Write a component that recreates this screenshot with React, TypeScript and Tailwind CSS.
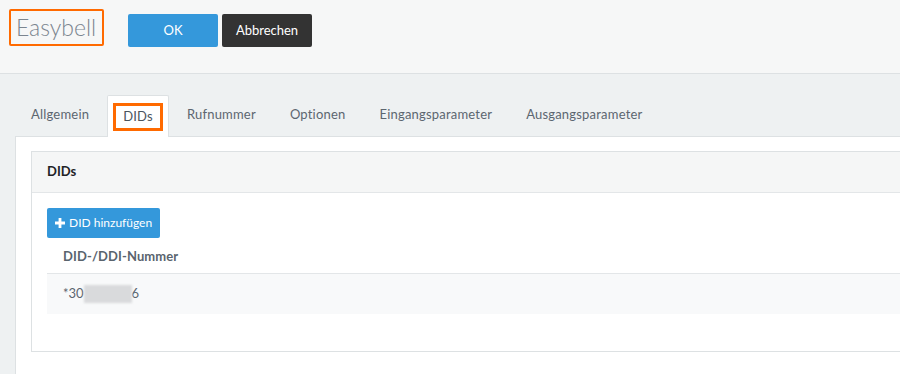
const tabs = ["Allgemein", "DIDs", "Rufnummer", "Optionen", "Eingangsparameter", "Ausgangsparameter"];

export default function App() {
  return (
    <div className="w-[900px] h-[374px] overflow-hidden bg-[#eef1f2] font-['Lato',sans-serif] text-[#4a545e]">
      <div className="h-[74px] bg-[#f6f7f7] border-b border-[#dde1e3] flex items-start pl-[9px] pt-[9px]">
        <div className="w-[95px] h-[37px] border-2 border-[#ff6a00] rounded-[2px] flex items-center pl-[5px]">
          <span className="text-[23px] font-light text-[#7b858f] leading-none">Easybell</span>
        </div>
        <div className="flex mt-[5px] ml-[24px] gap-[4px]">
          <button className="w-[90px] h-[33px] bg-[#3498db] text-white text-[13px] rounded-[2px]">OK</button>
          <button className="w-[90px] h-[33px] bg-[#333333] text-white text-[13px] rounded-[2px]">Abbrechen</button>
        </div>
      </div>

      <div className="pt-[20px] pl-[15px]">
        <div className="flex h-[42px] items-stretch">
          {tabs.map((t) =>
            t === "DIDs" ? (
              <div key={t} className="mr-[2px] px-[5px] bg-white border border-b-0 border-[#dde1e3] rounded-t-[2px] flex items-center relative top-[1px]">
                <span className="border-[3px] border-[#ff6a00] px-[7px] h-[28px] flex items-center text-[13px] tracking-[0.2px] text-[#4a545e]">{t}</span>
              </div>
            ) : (
              <div key={t} className="mr-[2px] px-[16px] flex items-center text-[13px] tracking-[0.2px] text-[#5c6670]">{t}</div>
            )
          )}
        </div>
        <div className="bg-white border-t border-l border-[#dde1e3] h-[240px] pl-[15px] pt-[14px]">
          <div className="border border-r-0 border-[#dde1e3] h-[201px] bg-white">
            <div className="h-[41px] bg-[#f5f6f6] border-b border-[#e3e6e8] flex items-center pl-[15px] text-[13px] font-bold text-[#1f2326]">
              DIDs
            </div>
            <div className="pl-[15px] pt-[15px]">
              <button className="h-[30px] px-[8px] bg-[#3498db] text-white text-[12px] rounded-[2px] flex items-center gap-[4px]">
                <svg width="10" height="10" viewBox="0 0 10 10">
                  <path d="M3.6 0h2.8v3.6H10v2.8H6.4V10H3.6V6.4H0V3.6h3.6z" fill="white" />
                </svg>
                DID hinzufügen
              </button>
              <div className="h-[36px] flex items-center pl-[16px] pt-[2px] text-[13px] tracking-[0.1px] font-bold text-[#5a646e] border-b border-[#e3e6e8]">
                DID-/DDI-Nummer
              </div>
              <div className="h-[40px] bg-[#f8f9fa] flex items-center pl-[16px] text-[13px] text-[#5c6670]">
                <span>*30</span>
                <span className="w-[48px] h-[18px] bg-[#d9dadc] blur-[1px]" />
                <span>6</span>
              </div>
            </div>
          </div>
        </div>
      </div>
    </div>
  );
}
